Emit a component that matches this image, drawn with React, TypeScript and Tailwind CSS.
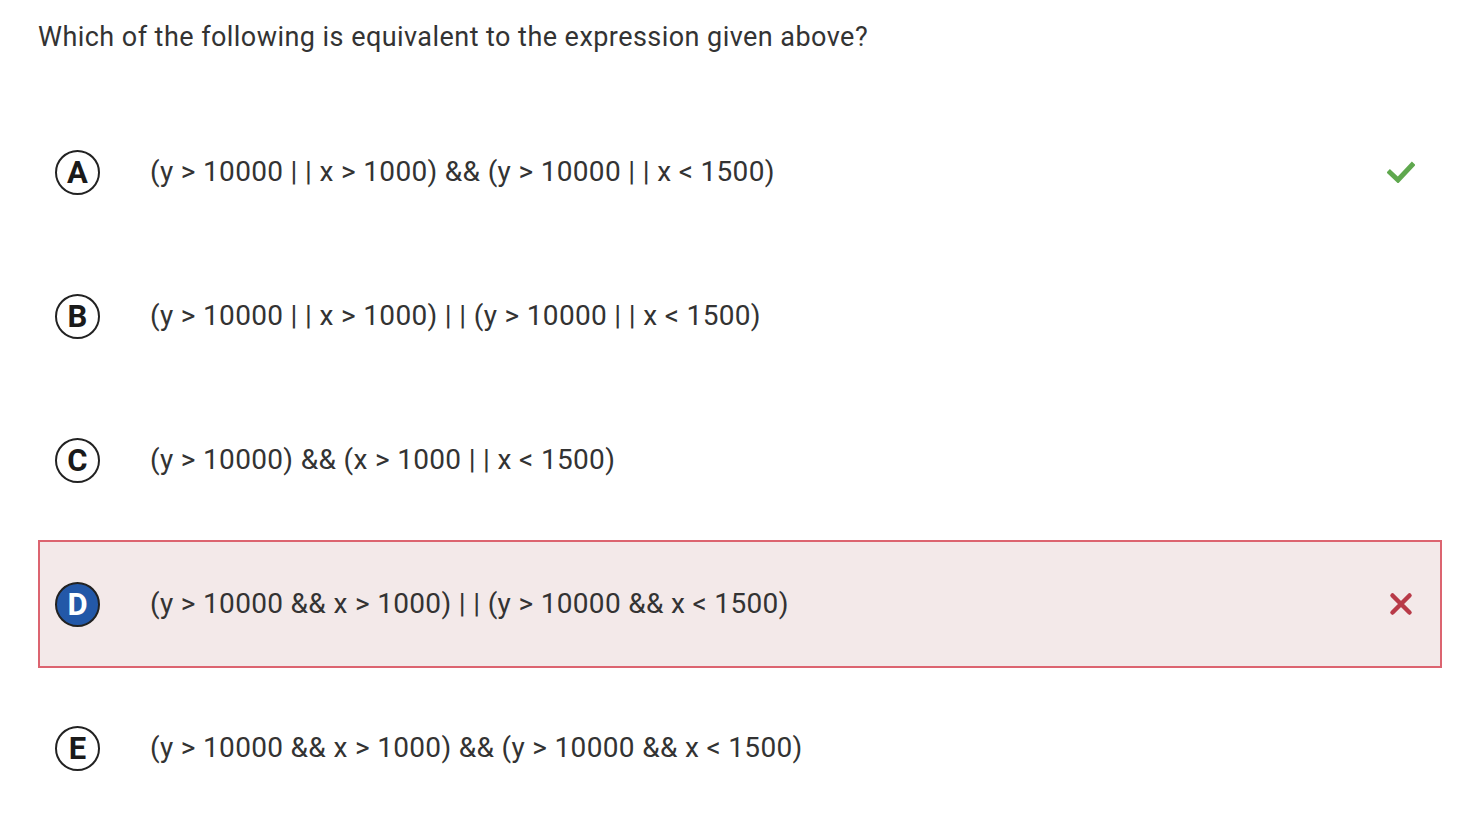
import React from 'react';

type Option = {
  letter: string;
  text: string;
  status?: 'correct' | 'wrong';
  selected?: boolean;
};

const options: Option[] = [
  { letter: 'A', text: '(y > 10000 | | x > 1000) && (y > 10000 | | x < 1500)', status: 'correct' },
  { letter: 'B', text: '(y > 10000 | | x > 1000) | | (y > 10000 | | x < 1500)' },
  { letter: 'C', text: '(y > 10000) && (x > 1000 | | x < 1500)' },
  { letter: 'D', text: '(y > 10000 && x > 1000) | | (y > 10000 && x < 1500)', status: 'wrong', selected: true },
  { letter: 'E', text: '(y > 10000 && x > 1000) && (y > 10000 && x < 1500)' },
];

function Check() {
  return (
    <svg width="28" height="22" viewBox="0 0 28 22">
      <path d="M3 11.5 L11 19 L25 4" fill="none" stroke="#5fa84e" strokeWidth="5" strokeLinecap="square" />
    </svg>
  );
}

function Cross() {
  return (
    <svg width="24" height="24" viewBox="0 0 24 24">
      <path d="M3.5 3.5 L20.5 20.5 M20.5 3.5 L3.5 20.5" fill="none" stroke="#b83a48" strokeWidth="4.5" strokeLinecap="round" />
    </svg>
  );
}

export default function App() {
  return (
    <div className="min-h-screen bg-white pl-[38px] pr-[36px] pt-[19px] text-[#333333]" style={{ fontFamily: 'Roboto, "Liberation Sans", sans-serif' }}>
      {/* Question */}
      <p className="text-[27px] leading-[36px] tracking-[0.45px]">
        Which of the following is equivalent to the expression given above?
      </p>

      {/* Options */}
      <div className="mt-[53px] flex flex-col gap-[16px]">
        {options.map((o) => (
          <div
            key={o.letter}
            className={`flex h-[128px] items-center border-2 pl-[15px] pr-[24px] ${
              o.selected ? 'border-[#dc6470] bg-[#f3e9e9]' : 'border-transparent'
            }`}
          >
            <div
              className={`flex h-[45px] w-[45px] shrink-0 items-center justify-center rounded-full border-2 border-[#222222] text-[31px] font-bold leading-none ${
                o.selected ? 'bg-[#2358a8] text-white' : 'bg-white text-[#1a1a1a]'
              }`}
            >
              {o.letter}
            </div>
            <span className="ml-[50px] flex-1 text-[28px] leading-[36px] tracking-[0.33px] text-[#333333]">{o.text}</span>
            <div className="flex w-[30px] justify-center">
              {o.status === 'correct' && <Check />}
              {o.status === 'wrong' && <Cross />}
            </div>
          </div>
        ))}
      </div>
    </div>
  );
}
